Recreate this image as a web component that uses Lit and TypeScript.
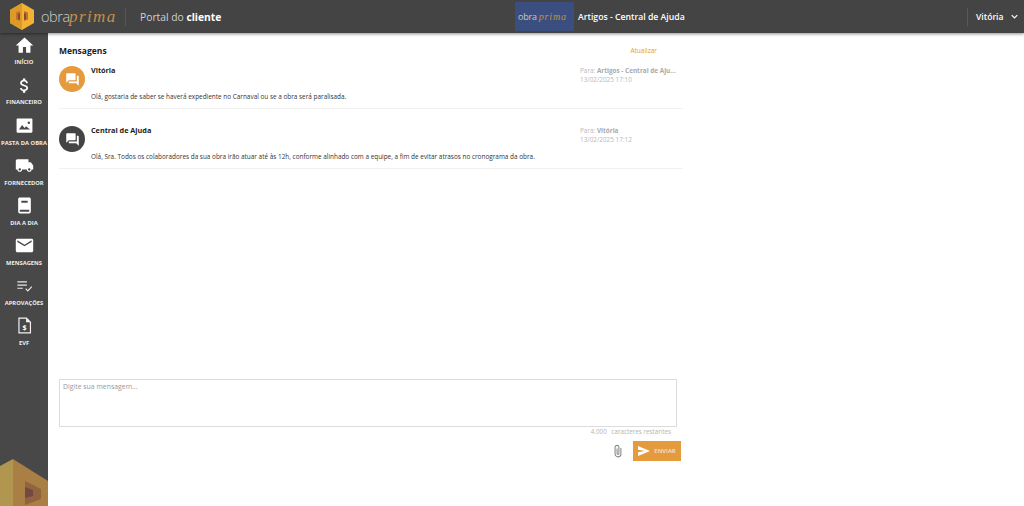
import { LitElement, html, css, svg } from "lit";
import { customElement } from "lit/decorators.js";

const chat = svg`<path fill="#fff" d="M21 6h-2v9H6v2c0 .55.45 1 1 1h11l4 4V7c0-.55-.45-1-1-1zm-4 6V3c0-.55-.45-1-1-1H3c-.55 0-1 .45-1 1v14l4-4h10c.55 0 1-.45 1-1z"/>`;

const navItems: { label: string; icon: unknown }[] = [
  { label: "INÍCIO", icon: svg`<svg width="19" height="19" viewBox="0 0 24 24"><path fill="#fff" d="M10 21v-7h4v7h5.5v-9H23L12 2 1 12h3.5v9z"/></svg>` },
  { label: "FINANCEIRO", icon: svg`<svg width="19" height="19" viewBox="0 0 24 24"><path fill="#fff" d="M11.8 10.9c-2.27-.59-3-1.2-3-2.15 0-1.09 1.01-1.85 2.7-1.85 1.78 0 2.44.85 2.5 2.1h2.21c-.07-1.72-1.12-3.3-3.21-3.81V3h-3v2.16c-1.94.42-3.5 1.68-3.5 3.61 0 2.31 1.91 3.46 4.7 4.13 2.5.6 3 1.48 3 2.41 0 .69-.49 1.79-2.7 1.79-2.06 0-2.87-.92-2.98-2.1h-2.2c.12 2.19 1.76 3.42 3.68 3.83V21h3v-2.15c1.95-.37 3.5-1.5 3.5-3.55 0-2.84-2.43-3.81-4.7-4.4z"/></svg>` },
  { label: "PASTA DA OBRA", icon: svg`<svg width="19" height="19" viewBox="0 0 24 24"><path fill="#fff" d="M22 20V4c0-.6-.4-1-1-1H3c-.6 0-1 .4-1 1v16c0 .6.4 1 1 1h18c.6 0 1-.4 1-1zM5 17l4-5.5 3 3.8 2-2.5 5 4.2H5zm12.5-7a1.5 1.5 0 1 1 0-3 1.5 1.5 0 0 1 0 3z"/></svg>` },
  { label: "FORNECEDOR", icon: svg`<svg width="19" height="19" viewBox="0 0 24 24"><path fill="#fff" d="M20 8h-3V4H3c-1.1 0-2 .9-2 2v11h2c0 1.66 1.34 3 3 3s3-1.34 3-3h6c0 1.66 1.34 3 3 3s3-1.34 3-3h2v-5l-3-4zM6 18.5c-.83 0-1.5-.67-1.5-1.5s.67-1.5 1.5-1.5 1.5.67 1.5 1.5-.67 1.5-1.5 1.5zm12 0c-.83 0-1.5-.67-1.5-1.5s.67-1.5 1.5-1.5 1.5.67 1.5 1.5-.67 1.5-1.5 1.5z"/></svg>` },
  { label: "DIA A DIA", icon: svg`<svg width="19" height="19" viewBox="0 0 24 24"><path fill="#fff" d="M18 2H6c-1.1 0-2 .9-2 2v16c0 1.1.9 2 2 2h12c1.1 0 2-.9 2-2V4c0-1.1-.9-2-2-2zM8 6h8v2.5H8V6zm10 14H6v-2.5h12V20z"/></svg>` },
  { label: "MENSAGENS", icon: svg`<svg width="19" height="19" viewBox="0 0 24 24"><path fill="#fff" d="M21 3.5H3c-1.1 0-2 .9-2 2v13c0 1.1.9 2 2 2h18c1.1 0 2-.9 2-2v-13c0-1.1-.9-2-2-2zm0 4L12 13 3 7.5v-2l9 5.5 9-5.5v2z"/></svg>` },
  { label: "APROVAÇÕES", icon: svg`<svg width="19" height="19" viewBox="0 0 24 24"><path fill="none" stroke="#e8e8e8" stroke-width="1.5" d="M3 7.5h12M3 11.5h12M3 15.5h7M13.5 16l2.7 2.7 5-5.4"/></svg>` },
  { label: "EVF", icon: svg`<svg width="19" height="19" viewBox="0 0 24 24"><path fill="none" stroke="#f2f2f2" stroke-width="1.5" d="M5 2.8h9.5L19.5 8v13.2H5z"/><path fill="#f2f2f2" d="M14 2.8 19.5 8H14z"/><text x="12" y="18" text-anchor="middle" fill="#fff" font-size="9" font-weight="700" font-family="Open Sans, sans-serif">$</text></svg>` },
];

const messages = [
  {
    name: "Vitória",
    to: "Artigos - Central de Aju...",
    date: "13/02/2025 17:10",
    text: "Olá, gostaria de saber se haverá expediente no Carnaval ou se a obra será paralisada.",
    alt: false,
  },
  {
    name: "Central de Ajuda",
    to: "Vitória",
    date: "13/02/2025 17:12",
    text: "Olá, Sra. Todos os colaboradores da sua obra irão atuar até às 12h, conforme alinhado com a equipe, a fim de evitar atrasos no cronograma da obra.",
    alt: true,
  },
];

@customElement("app-root")
export class AppRoot extends LitElement {
  static styles = css`
    :host {
      display: block;
      width: 1024px;
      height: 506px;
      overflow: hidden;
      position: relative;
      background: #fff;
      font-family: "Open Sans", "Liberation Sans", sans-serif;
      color: #222;
    }
    .top {
      height: 33px;
      background: #444444;
      box-shadow: 0 1px 3px rgba(0, 0, 0, 0.45);
      display: flex;
      align-items: center;
      position: relative;
      z-index: 2;
      color: #fff;
    }
    .brand {
      width: 515px;
      display: flex;
      align-items: center;
      flex: none;
      padding-left: 10px;
      box-sizing: border-box;
    }
    .obra {
      font-size: 14.5px;
      color: #cfcfcf;
      margin-left: 7px;
      letter-spacing: -0.4px;
      font-weight: 300;
      width: 28px;
      white-space: nowrap;
    }
    .prima {
      font-family: "Liberation Serif", serif;
      font-style: italic;
      font-size: 17px;
      color: #c69049;
      letter-spacing: 1.4px;
      width: 49px;
      white-space: nowrap;
    }
    .sep {
      width: 1px;
      height: 18px;
      background: #575757;
      margin: 0 14px 0 7px;
    }
    .portal {
      font-size: 10.3px;
      color: #d0d0d0;
    }
    .portal b {
      color: #fff;
      font-weight: 700;
    }
    .account {
      width: 59px;
      height: 29px;
      background: #3a4f7f;
      display: flex;
      align-items: center;
      box-sizing: border-box;
      padding-left: 3px;
      flex: none;
      font-size: 9px;
      color: #c9c9c9;
      letter-spacing: -0.2px;
    }
    .account i {
      font-family: "Liberation Serif", serif;
      color: #c69049;
      font-size: 10px;
      margin-left: 2px;
      letter-spacing: 0.8px;
    }
    .account-name {
      margin-left: 4px;
      font-size: 8.7px;
      font-weight: 600;
      color: #fff;
      flex: 1;
    }
    .user {
      width: 57px;
      height: 18px;
      border-left: 1px solid #525a68;
      display: flex;
      align-items: center;
      box-sizing: border-box;
      padding-left: 8px;
      font-size: 8.6px;
      font-weight: 600;
      gap: 7px;
      flex: none;
    }
    .body {
      display: flex;
      height: 473px;
    }
    .side {
      width: 48px;
      flex: none;
      background: #484848;
      position: relative;
      display: flex;
      flex-direction: column;
      padding-top: 3px;
      box-sizing: border-box;
      overflow: hidden;
    }
    .nav {
      display: flex;
      flex-direction: column;
      align-items: center;
      height: 40px;
      flex: none;
      white-space: nowrap;
      font-size: 5.8px;
      font-weight: 700;
      color: #eee;
    }
    .nav svg {
      display: block;
      height: 19px;
      margin-bottom: 3px;
    }
    .nav:nth-child(n + 3) svg {
      margin-bottom: 4px;
    }
    .corner {
      position: absolute;
      left: 0;
      bottom: 0;
    }
    .main {
      width: 624px;
      margin-left: 11px;
      display: flex;
      flex-direction: column;
      flex: none;
    }
    .head {
      display: flex;
      justify-content: space-between;
      align-items: center;
      height: 18px;
      margin-top: 8px;
      flex: none;
    }
    .head h2 {
      margin: 0;
      font-size: 8.5px;
      font-weight: 700;
      color: #1c1c1c;
    }
    .head a {
      font-size: 6.5px;
      color: #e79a35;
      margin-right: 26px;
    }
    .msg {
      height: 49px;
      border-bottom: 1px solid #f2f2f2;
      display: flex;
      box-sizing: content-box;
      flex: none;
    }
    .msg + .msg {
      padding-top: 10px;
    }
    .avatar {
      width: 26px;
      height: 26px;
      border-radius: 50%;
      background: #e59a3c;
      display: flex;
      align-items: center;
      justify-content: center;
      flex: none;
      margin: 7px 6px 0 0;
    }
    .avatar.alt {
      background: #444;
    }
    .msg-body {
      flex: 1;
      min-width: 0;
    }
    .row {
      display: flex;
      justify-content: space-between;
      height: 32px;
      box-sizing: border-box;
      padding-top: 6px;
    }
    .name {
      font-size: 7.25px;
      font-weight: 700;
      color: #222;
      line-height: 11px;
    }
    .meta {
      width: 103px;
      flex: none;
      font-size: 6.4px;
      line-height: 9px;
      color: #b9b9b9;
      padding-top: 1px;
    }
    .meta b {
      font-weight: 700;
      color: #aaa;
    }
    .text {
      margin: 0;
      font-size: 6.42px;
      line-height: 10px;
      color: #333;
      padding-top: 1px;
    }
    .spacer {
      flex: 1;
    }
    .compose {
      width: 618px;
      height: 48px;
      border: 1px solid #dcdcdc;
      box-sizing: border-box;
      font-size: 6.9px;
      color: #999;
      padding: 2px 3px;
      line-height: 10px;
      flex: none;
    }
    .remaining {
      width: 612px;
      text-align: right;
      font-size: 6.3px;
      color: #b5b5b5;
      line-height: 9px;
    }
    .remaining span {
      margin-right: 3px;
    }
    .actions {
      display: flex;
      justify-content: flex-end;
      align-items: center;
      gap: 10px;
      margin-top: 5px;
      margin-bottom: 45px;
      padding-right: 2px;
    }
    .send {
      width: 48px;
      height: 20px;
      background: #e59a3c;
      color: #f6e4cc;
      font-size: 6px;
      font-weight: 600;
      display: flex;
      align-items: center;
      justify-content: center;
      gap: 4px;
    }
  `;

  render() {
    return html`
      <div class="top">
        <div class="brand">
          <svg width="24" height="27" viewBox="0 0 24 27">
            <path fill="#f2b233" d="M12 0 24 7v13l-12 7L0 20V7z" />
            <path fill="#dc9a28" d="M12 0v27L0 20V7z" />
            <path fill="#c2702a" d="M6 9.5l4 -1.5v10l-4 -1.5z" />
            <path fill="#c2702a" d="M18 9.5l-4 -1.5v10l4 -1.5z" />
            <path fill="#8a4a26" d="M8 11l2-1v7l-2-1zM16 11l-2-1v7l2-1z" />
          </svg>
          <span class="obra">obra</span>
          <span class="prima">prima</span>
          <span class="sep"></span>
          <span class="portal">Portal do <b>cliente</b></span>
        </div>
        <div class="account">obra<i>prima</i></div>
        <div class="account-name">Artigos - Central de Ajuda</div>
        <div class="user">
          Vitória
          <svg width="7" height="6" viewBox="0 0 7 6">
            <path fill="none" stroke="#fff" stroke-width="1.2" d="M.7 1.2 3.5 4l2.8-2.8" />
          </svg>
        </div>
      </div>
      <div class="body">
        <nav class="side">
          ${navItems.map(
            (n) => html`<div class="nav">${n.icon}<span>${n.label}</span></div>`
          )}
          <svg class="corner" width="48" height="48" viewBox="0 0 48 48">
            <path fill="#b0964e" d="M0 8 13 1V48H0z" />
            <path fill="#a97f45" d="M13 1 48 23V48H13z" />
            <path fill="#91643e" d="M25 23 41 31V41L25 47z" />
            <path fill="#75493f" d="M25 29 33 32V38L25 40z" />
          </svg>
        </nav>
        <main class="main">
          <div class="head">
            <h2>Mensagens</h2>
            <a>Atualizar</a>
          </div>
          ${messages.map(
            (m) => html`
              <div class="msg">
                <div class="avatar ${m.alt ? "alt" : ""}">
                  <svg width="15" height="15" viewBox="0 0 24 24">${chat}</svg>
                </div>
                <div class="msg-body">
                  <div class="row">
                    <div class="name">${m.name}</div>
                    <div class="meta">Para: <b>${m.to}</b><br />${m.date}</div>
                  </div>
                  <p class="text">${m.text}</p>
                </div>
              </div>
            `
          )}
          <div class="spacer"></div>
          <div class="compose">Digite sua mensagem...</div>
          <div class="remaining"><span>4.000</span> caracteres restantes</div>
          <div class="actions">
            <svg width="10" height="14" viewBox="0 0 12 16">
              <path
                fill="none"
                stroke="#8a8a8a"
                stroke-width="1.3"
                d="M9.5 4.5v7a3.5 3.5 0 0 1-7 0V3.5a2.3 2.3 0 0 1 4.6 0v7.5a1.1 1.1 0 0 1-2.2 0V5"
              />
            </svg>
            <div class="send">
              <svg width="12" height="10" viewBox="0 0 12 10">
                <path fill="#fff" d="M0 0 12 5 0 10V6.2L7 5 0 3.8z" />
              </svg>
              ENVIAR
            </div>
          </div>
        </main>
      </div>
    `;
  }
}
